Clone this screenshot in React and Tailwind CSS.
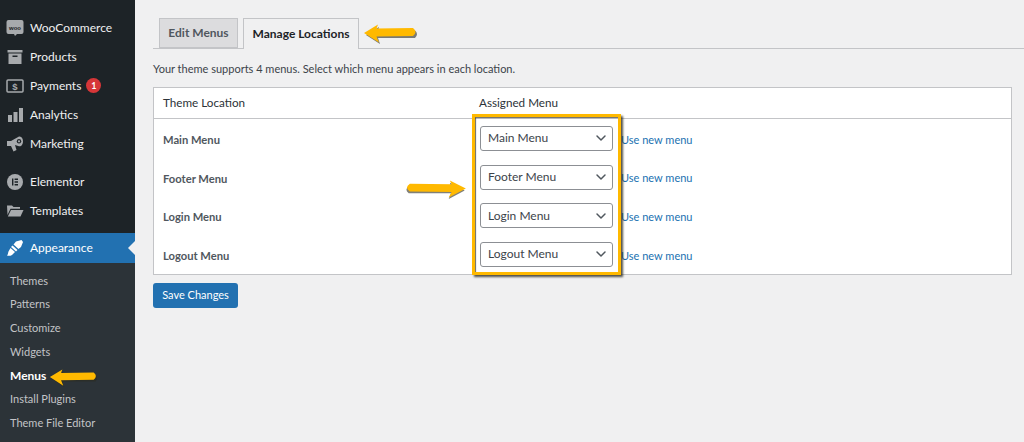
import { ChevronDown } from "lucide-react";

const font = "font-['Lato','Open_Sans',sans-serif]";

function Arrow({ className, flip, w = 56, h = 20 }) {
  // yellow hand drawn arrow, points left by default
  return (
    <svg className={className} width={w} height={h} viewBox="0 0 56 20" preserveAspectRatio="none" style={flip ? { transform: "scaleX(-1)" } : undefined}>
      <path d="M2 10 L15 2 L14 6 L51 5.5 Q55 9 51 13 L14 13 L16 19 Z" fill="#2b2b20" opacity="0.6" transform={flip ? "translate(0 1)" : "translate(1 1)"} />
      <path d="M1 9 L15 0.5 L13.5 4.5 L50 4 Q55 8 50 12 L13.5 12.5 L16 18.5 Z" fill="#ffb900" />
    </svg>
  );
}

const WooIcon = () => (
  <svg width="18" height="18" viewBox="0 0 18 18">
    <path d="M2.5 1h13a2 2 0 0 1 2 2v10a2 2 0 0 1-2 2H11l-2 2-1-2H2.5a2 2 0 0 1-2-2V3a2 2 0 0 1 2-2z" fill="#a7aaad" />
    <text x="9" y="10.5" fontSize="6" fontWeight="700" textAnchor="middle" fill="#1d2327" fontFamily="Liberation Sans, sans-serif">woo</text>
  </svg>
);

const ProductsIcon = () => (
  <svg width="18" height="18" viewBox="0 0 18 18" fill="#a7aaad">
    <path d="M1.5 2h15v2.5h-15z" />
    <path d="M2.5 5.5h13V16h-13zM6.5 7.5V9h5V7.5z" fillRule="evenodd" />
  </svg>
);

const PaymentsIcon = () => (
  <svg width="18" height="16" viewBox="0 0 18 16" fill="none">
    <rect x="1" y="2" width="16" height="12" rx="1" stroke="#a7aaad" strokeWidth="1.5" />
    <text x="9" y="12" fontSize="9.5" fontWeight="700" textAnchor="middle" fill="#a7aaad" fontFamily="Liberation Sans, sans-serif">$</text>
  </svg>
);

const AnalyticsIcon = () => (
  <svg width="18" height="18" viewBox="0 0 18 18" fill="#a7aaad">
    <rect x="2" y="9" width="4" height="7" />
    <rect x="7.5" y="6" width="4" height="10" />
    <rect x="13" y="2" width="4" height="14" />
  </svg>
);

const MarketingIcon = () => (
  <svg width="18" height="18" viewBox="0 0 18 18" fill="#a7aaad">
    <path d="M1 6h4l8-4.5c2.5-.5 4 2 4 4.8s-1.5 5.5-4 5L9 10l1.5 5-3 1.5L5 11H1z" />
    <circle cx="13" cy="6.3" r="2.2" fill="#1d2327" />
    <circle cx="13" cy="6.3" r="1.1" fill="#a7aaad" />
  </svg>
);

const ElementorIcon = () => (
  <svg width="18" height="18" viewBox="0 0 18 18">
    <circle cx="9" cy="9" r="8" fill="#a7aaad" />
    <path d="M6 5.5h1.4v7H6zM8.6 5.5H12v1.4H8.6zM8.6 8.3H12v1.4H8.6zM8.6 11.1H12v1.4H8.6z" fill="#1d2327" />
  </svg>
);

const TemplatesIcon = () => (
  <svg width="18" height="18" viewBox="0 0 18 18" fill="#a7aaad">
    <path d="M1 3.5h5l1.5 1.5h6.5v1.8H4.5L1.5 13z" />
    <path d="M5 8h12.5l-3 6.5H1.8z" />
  </svg>
);

const BrushIcon = () => (
  <svg width="18" height="18" viewBox="0 0 18 18" fill="#fff">
    <path d="M10 2.5 L15.5 1 L17 3 L15 8 L12.5 10 L7.5 5.5z" />
    <path d="M6.5 6.5 L11.5 11 L10 12.5 L5 8z" />
    <path d="M4.5 9 L9 13 L6 16 C4.5 17 2 17 1 16.5 C2 15.5 2 14 2.5 12.5z" />
  </svg>
);

const topItems = [
  { label: "WooCommerce", icon: <WooIcon /> },
  { label: "Products", icon: <ProductsIcon /> },
  { label: "Payments", icon: <PaymentsIcon />, badge: "1" },
  { label: "Analytics", icon: <AnalyticsIcon /> },
  { label: "Marketing", icon: <MarketingIcon /> },
];

const subItems = ["Themes", "Patterns", "Customize", "Widgets", "Menus", "Install Plugins", "Theme File Editor"];

const rows = ["Main Menu", "Footer Menu", "Login Menu", "Logout Menu"];

function SideItem({ label, icon, badge }) {
  return (
    <div className="flex h-[29px] items-center pl-[6px] text-[12px] text-[#f0f0f1]">
      <span className="flex w-[24px] justify-start">{icon}</span>
      <span>{label}</span>
      {badge && (
        <span className="ml-[5px] flex h-[15px] w-[15px] items-center justify-center rounded-full bg-[#d63638] text-[9px] font-bold text-white">
          {badge}
        </span>
      )}
    </div>
  );
}

export default function App() {
  return (
    <div className={`${font} flex h-[442px] w-[1024px] overflow-hidden bg-[#f0f0f1]`}>
      <aside className="flex w-[135px] shrink-0 flex-col bg-[#1d2327]">
        <div className="pt-[13px]">
          {topItems.map((item) => (
            <SideItem key={item.label} {...item} />
          ))}
        </div>
        <div className="mt-[9px]">
          <SideItem label="Elementor" icon={<ElementorIcon />} />
          <SideItem label="Templates" icon={<TemplatesIcon />} />
        </div>
        <div className="relative mt-[8px] flex h-[30px] items-center bg-[#2271b1] pl-[6px] text-[12px] text-white">
          <span className="flex w-[24px] justify-start"><BrushIcon /></span>
          <span>Appearance</span>
          <span className="absolute right-0 top-[8px] border-y-[7px] border-r-[7px] border-y-transparent border-r-[#f0f0f1]" />
        </div>
        <div className="flex flex-1 flex-col bg-[#2c3338] pt-[6px] text-[11px] text-[#c3c4c7]">
          {subItems.map((s) => (
            <div key={s} className={`relative flex h-[23.7px] items-center pl-[10px] ${s === "Menus" ? "text-[12px] font-bold text-white" : ""}`}>
              {s}
              {s === "Menus" && <Arrow className="absolute left-[49px] top-[5px]" w={50} h={18} />}
            </div>
          ))}
        </div>
      </aside>

      <main className="relative flex-1 pl-[18px] pr-[12px] pt-[18px] text-[11px] text-[#3c434a]">
        <div className="-mr-[12px] flex h-[31px] items-start gap-[5px] border-b border-[#c3c4c7] pl-[6px]">
          <div className="flex h-[30px] w-[79px] items-center justify-center border border-[#c3c4c7] bg-[#dcdcde] text-[12px] font-bold text-[#50575e]">
            Edit Menus
          </div>
          <div className="flex h-[31px] w-[116px] items-center justify-center border border-b-0 border-[#c3c4c7] bg-[#f0f0f1] text-[12px] font-bold text-[#1d2327]">
            Manage Locations
          </div>
          <Arrow className="-ml-[1px] mt-[6px]" />
        </div>

        <p className="mt-[11px] h-[17px] text-[11px] leading-[17px] text-[#3c434a]">
          Your theme supports 4 menus. Select which menu appears in each location.
        </p>

        <div className="mt-[10px] w-[859px] border border-[#c3c4c7] bg-white">
          <div className="flex h-[31px] items-center border-b border-[#c3c4c7] text-[11.7px] text-[#2c3338]">
            <span className="w-[325px] pl-[9px]">Theme Location</span>
            <span>Assigned Menu</span>
          </div>
          {rows.map((r) => (
            <div key={r} className="flex h-[38.7px] items-center">
              <span className="mt-[4px] w-[326px] pl-[9px] text-[11.2px] font-bold text-[#50575e]">{r}</span>
              <div className="flex h-[25px] w-[133px] items-center justify-between rounded-[3px] border border-[#8c8f94] bg-white pl-[7px] pr-[3px] text-[12px] text-[#3c434a]">
                {r}
                <ChevronDown size={16} strokeWidth={2.2} className="text-[#50575e]" />
              </div>
              <a className="ml-[8px] mt-[3px] text-[11px] text-[#2271b1]">Use new menu</a>
            </div>
          ))}
        </div>

        <button className="mt-[8px] flex h-[25px] w-[85px] items-center justify-center rounded-[3px] bg-[#2271b1] text-[11px] text-white">
          Save Changes
        </button>

        {/* callout box and arrow lie over the table */}
        <div className="absolute left-[337px] top-[114px] h-[161px] w-[149px] border-[3px] border-[#ffb900] shadow-[2px_2px_2px_rgba(40,40,30,0.8),inset_1px_1px_1px_rgba(40,40,30,0.7)]" />
        <Arrow flip className="absolute left-[268px] top-[180px]" w={64} h={19} />
      </main>
    </div>
  );
}
